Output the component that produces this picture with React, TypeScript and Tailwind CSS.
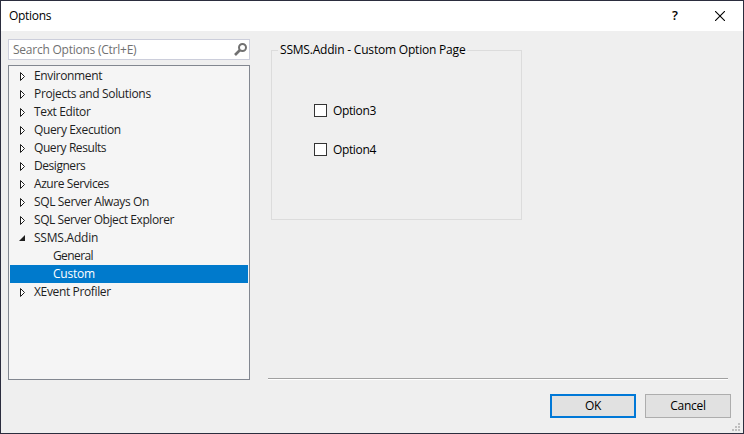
import React from "react";

type Node = { label: string; state: "closed" | "open" | "leaf"; selected?: boolean; tracking: string };

const nodes: Node[] = [
  { label: "Environment", state: "closed", tracking: "tracking-[-0.36px]" },
  { label: "Projects and Solutions", state: "closed", tracking: "tracking-[-0.34px]" },
  { label: "Text Editor", state: "closed", tracking: "tracking-[-0.36px]" },
  { label: "Query Execution", state: "closed", tracking: "tracking-[-0.36px]" },
  { label: "Query Results", state: "closed", tracking: "tracking-[-0.43px]" },
  { label: "Designers", state: "closed", tracking: "tracking-[-0.45px]" },
  { label: "Azure Services", state: "closed", tracking: "tracking-[-0.42px]" },
  { label: "SQL Server Always On", state: "closed", tracking: "tracking-[-0.37px]" },
  { label: "SQL Server Object Explorer", state: "closed", tracking: "tracking-[-0.42px]" },
  { label: "SSMS.Addin", state: "open", tracking: "tracking-[-0.22px]" },
  { label: "General", state: "leaf", tracking: "tracking-[-0.6px]" },
  { label: "Custom", state: "leaf", selected: true, tracking: "tracking-[-0.25px]" },
  { label: "XEvent Profiler", state: "closed", tracking: "tracking-[-0.36px]" },
];

function Expander({ open }: { open: boolean }) {
  return (
    <svg width="8" height="10" viewBox="0 0 8 10" className="ml-[9px] mr-[7px] shrink-0">
      {open ? (
        <path d="M6 2V8H0Z" fill="#1e1e1e" />
      ) : (
        <path d="M1.5 1.5V9.5L5.5 5.5Z" fill="#fff" stroke="#1e1e1e" strokeWidth="1" />
      )}
    </svg>
  );
}

function TreeRow({ node }: { node: Node }) {
  return (
    <div className={"flex h-[18px] items-center leading-[18px] " + (node.selected ? "bg-[#007acc] text-white" : "text-[#1e1e1e]")}>
      {node.state === "leaf" ? <span className="w-[43px]" /> : <Expander open={node.state === "open"} />}
      <span className={"whitespace-nowrap " + node.tracking}>{node.label}</span>
    </div>
  );
}

function CheckOption({ label }: { label: string }) {
  return (
    <label className="flex h-[13px] items-center gap-[6px] leading-[13px]">
      <span className="size-[13px] border border-[#333] bg-white" />
      <span className="tracking-[-0.36px]">{label}</span>
    </label>
  );
}

const gripDots = [[6, 0], [3, 3], [6, 3], [0, 6], [3, 6], [6, 6]];

export default function App() {
  return (
    <div className="flex h-[434px] w-[744px] flex-col overflow-hidden border border-[#2b2d3e] bg-[#efefef] font-['Open_Sans','Noto_Sans',sans-serif] text-[12px] text-black">
      <header className="flex h-[30px] shrink-0 items-center bg-white pl-2">
        <span className="flex-1 tracking-[-0.3px]">Options</span>
        <span className="mr-[37px] text-[13px] font-semibold">?</span>
        <svg width="10" height="10" viewBox="0 0 10 10" className="mr-[18px]">
          <path d="M0 0L10 10M10 0L0 10" stroke="#000" strokeWidth="1.1" />
        </svg>
      </header>
      <div className="flex h-[349px] shrink-0 pl-[7px] pt-2">
        <div className="flex w-[242px] flex-col gap-[5px]">
          <div className="flex h-[21px] items-center justify-between border border-[#cccedb] bg-white pl-1 pr-[2px] text-[#717171]">
            <span className="tracking-[-0.24px]">Search Options (Ctrl+E)</span>
            <svg width="13" height="13" viewBox="0 0 13 13" fill="none" stroke="#717171">
              <circle cx="8.5" cy="4.5" r="3.5" strokeWidth="2" />
              <path d="M6 7L1 12" strokeWidth="2.6" />
            </svg>
          </div>
          <div className="h-[315px] border border-[#828790] bg-[#f5f5f5] p-[1px]">
            {nodes.map((n) => <TreeRow key={n.label} node={n} />)}
          </div>
        </div>
        <main className="ml-[18px] flex w-[460px] flex-col justify-between">
          <fieldset className="ml-[3px] mt-[2px] flex h-[179px] w-[251px] flex-col border border-[#dcdcdc]">
            <legend className="ml-[6px] h-[18px] px-[2px] leading-[18px] tracking-[-0.2px]">SSMS.Addin - Custom Option Page</legend>
            <div className="flex flex-col gap-[26px] pl-[42px] pt-[45px]">
              <CheckOption label="Option3" />
              <CheckOption label="Option4" />
            </div>
          </fieldset>
          <div className="h-[2px] border-t border-[#a0a0a0] bg-white" />
        </main>
      </div>
      <footer className="flex flex-1 pl-[549px] pt-[14px]">
        <button className="h-6 w-[86px] border-2 border-[#0078d7] bg-[#e1e1e1] tracking-[-0.3px]">OK</button>
        <button className="ml-[9px] h-6 w-[86px] border border-[#adadad] bg-[#e1e1e1] tracking-[-0.3px]">Cancel</button>
        <svg width="8" height="8" viewBox="0 0 8 8" className="ml-[1px] mt-[29px]">
          {gripDots.map(([x, y]) => <rect key={`${x}-${y}`} x={x} y={y} width="2" height="2" fill="#bfbfbf" />)}
        </svg>
      </footer>
    </div>
  );
}
